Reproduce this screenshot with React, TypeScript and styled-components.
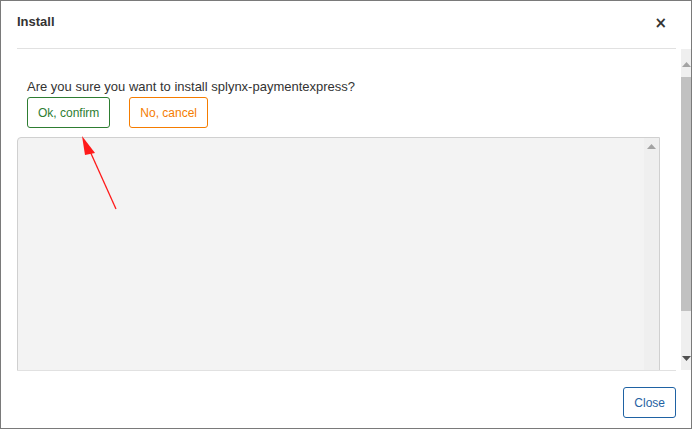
import React from 'react';
import styled, { createGlobalStyle } from 'styled-components';

const GlobalStyle = createGlobalStyle`
  html, body {
    margin: 0;
    padding: 0;
    background: #ffffff;
  }
  body {
    font-family: "Liberation Sans", Arial, sans-serif;
    color: #333333;
  }
`;

const Modal = styled.div`
  position: relative;
  width: 692px;
  height: 429px;
  box-sizing: border-box;
  border: 1px solid #7a7a7a;
  background: #ffffff;
  display: flex;
  flex-direction: column;
  overflow: hidden;
`;

const Header = styled.div`
  height: 47px;
  margin: 0 15px 0 16px;
  border-bottom: 1px solid #e1e1e1;
  display: flex;
  align-items: flex-start;
  justify-content: space-between;
`;

const Title = styled.h4`
  margin: 13px 0 0 0;
  font-size: 13px;
  font-weight: bold;
  color: #333333;
  line-height: 16px;
`;

const CloseX = styled.button`
  margin: 14px 9px 0 0;
  padding: 0;
  border: 0;
  background: none;
  font-family: "DejaVu Sans", sans-serif;
  font-size: 15px;
  font-weight: bold;
  line-height: 16px;
  color: #333333;
`;

const Body = styled.div`
  height: 321px;
  display: flex;
`;

const Content = styled.div`
  flex: 1;
  overflow: hidden;
  padding: 30px 21px 0 16px;
`;

const Prompt = styled.div`
  padding-left: 10px;
`;

const Question = styled.p`
  margin: 0;
  font-size: 13px;
  line-height: 16px;
  color: #333333;
`;

const Actions = styled.div`
  display: flex;
  gap: 19px;
  margin-top: 2px;
`;

const OutlineButton = styled.button<{ $color: string }>`
  height: 31px;
  padding: 0 10px;
  box-sizing: border-box;
  border: 1px solid ${p => p.$color};
  border-radius: 3px;
  background: #ffffff;
  color: ${p => p.$color};
  font-family: "Liberation Sans", Arial, sans-serif;
  font-size: 12px;
`;

const LogBox = styled.div`
  margin-top: 9px;
  height: 260px;
  border: 1px solid #d0d0d0;
  border-radius: 4px 0 0 0;
  background: #f3f3f3;
  display: flex;
  justify-content: flex-end;
`;

const InnerTrack = styled.div`
  width: 15px;
  background: #efefef;
  display: flex;
  justify-content: center;
  padding-top: 6px;
`;

const Scrollbar = styled.div`
  width: 10px;
  background: #efefef;
  display: flex;
  flex-direction: column;
  align-items: center;
`;

const Thumb = styled.div`
  width: 10px;
  height: 234px;
  background: #c1c1c1;
  margin-top: 6px;
`;

const Spacer = styled.div`
  flex: 1;
`;

const Footer = styled.div`
  flex: 1;
  margin: 0 15px 0 16px;
  border-top: 1px solid #e1e1e1;
  display: flex;
  justify-content: flex-end;
  align-items: flex-start;
  padding-top: 16px;
`;

const Arrow = styled.svg`
  position: absolute;
  left: 0;
  top: 0;
  pointer-events: none;
`;

const Tri: React.FC<{ up?: boolean; color: string }> = ({ up, color }) => (
  <svg width="9" height="5" viewBox="0 0 9 5">
    <polygon points={up ? '0,5 4.5,0 9,5' : '0,0 4.5,5 9,0'} fill={color} />
  </svg>
);

const App: React.FC = () => {
  return (
    <>
      <GlobalStyle />
      <Modal>
        <Header>
          <Title>Install</Title>
          <CloseX>×</CloseX>
        </Header>
        <Body>
          <Content>
            <Prompt>
              <Question>Are you sure you want to install splynx-paymentexpress?</Question>
              <Actions>
                <OutlineButton $color="#2e7d32">Ok, confirm</OutlineButton>
                <OutlineButton $color="#f57c00">No, cancel</OutlineButton>
              </Actions>
            </Prompt>
            <LogBox>
              <InnerTrack>
                <Tri up color="#a3a3a3" />
              </InnerTrack>
            </LogBox>
          </Content>
          <Scrollbar>
            <div style={{ marginTop: 4 }}>
              <Tri up color="#a3a3a3" />
            </div>
            <Thumb />
            <Spacer />
            <div style={{ marginBottom: 5 }}>
              <Tri color="#505050" />
            </div>
          </Scrollbar>
        </Body>
        <Footer>
          <OutlineButton $color="#1f62a3">Close</OutlineButton>
        </Footer>
        <Arrow width="692" height="429">
          <line x1="115" y1="208" x2="88" y2="148" stroke="#ff1a1a" strokeWidth="1.3" />
          <polygon points="81,135 94,152 84,154" fill="#ff1a1a" />
        </Arrow>
      </Modal>
    </>
  );
};

export default App;
